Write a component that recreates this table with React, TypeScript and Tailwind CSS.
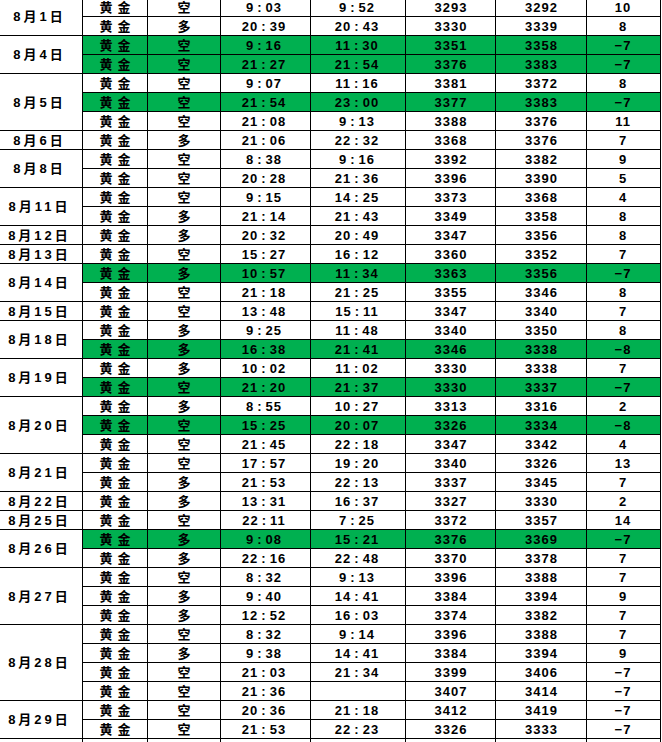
type Row = {
  kind: string;
  open: string;
  close: string;
  p1: string;
  p2: string;
  diff: string;
  green?: boolean;
};

type Group = { date: string; rows: Row[] };

const r = (
  kind: string,
  open: string,
  close: string,
  p1: string,
  p2: string,
  diff: string,
  green = false
): Row => ({ kind, open, close, p1, p2, diff, green });

const groups: Group[] = [
  { date: "8月1日", rows: [r("空", "9:03", "9:52", "3293", "3292", "10"), r("多", "20:39", "20:43", "3330", "3339", "8")] },
  { date: "8月4日", rows: [r("空", "9:16", "11:30", "3351", "3358", "−7", true), r("空", "21:27", "21:54", "3376", "3383", "−7", true)] },
  {
    date: "8月5日",
    rows: [
      r("空", "9:07", "11:16", "3381", "3372", "8"),
      r("空", "21:54", "23:00", "3377", "3383", "−7", true),
      r("空", "21:08", "9:13", "3388", "3376", "11"),
    ],
  },
  { date: "8月6日", rows: [r("多", "21:06", "22:32", "3368", "3376", "7")] },
  { date: "8月8日", rows: [r("空", "8:38", "9:16", "3392", "3382", "9"), r("空", "20:28", "21:36", "3396", "3390", "5")] },
  { date: "8月11日", rows: [r("空", "9:15", "14:25", "3373", "3368", "4"), r("多", "21:14", "21:43", "3349", "3358", "8")] },
  { date: "8月12日", rows: [r("多", "20:32", "20:49", "3347", "3356", "8")] },
  { date: "8月13日", rows: [r("空", "15:27", "16:12", "3360", "3352", "7")] },
  { date: "8月14日", rows: [r("多", "10:57", "11:34", "3363", "3356", "−7", true), r("空", "21:18", "21:25", "3355", "3346", "8")] },
  { date: "8月15日", rows: [r("空", "13:48", "15:11", "3347", "3340", "7")] },
  { date: "8月18日", rows: [r("多", "9:25", "11:48", "3340", "3350", "8"), r("多", "16:38", "21:41", "3346", "3338", "−8", true)] },
  { date: "8月19日", rows: [r("多", "10:02", "11:02", "3330", "3338", "7"), r("空", "21:20", "21:37", "3330", "3337", "−7", true)] },
  {
    date: "8月20日",
    rows: [
      r("多", "8:55", "10:27", "3313", "3316", "2"),
      r("空", "15:25", "20:07", "3326", "3334", "−8", true),
      r("空", "21:45", "22:18", "3347", "3342", "4"),
    ],
  },
  { date: "8月21日", rows: [r("空", "17:57", "19:20", "3340", "3326", "13"), r("多", "21:53", "22:13", "3337", "3345", "7")] },
  { date: "8月22日", rows: [r("多", "13:31", "16:37", "3327", "3330", "2")] },
  { date: "8月25日", rows: [r("空", "22:11", "7:25", "3372", "3357", "14")] },
  { date: "8月26日", rows: [r("多", "9:08", "15:21", "3376", "3369", "−7", true), r("多", "22:16", "22:48", "3370", "3378", "7")] },
  {
    date: "8月27日",
    rows: [
      r("空", "8:32", "9:13", "3396", "3388", "7"),
      r("多", "9:40", "14:41", "3384", "3394", "9"),
      r("多", "12:52", "16:03", "3374", "3382", "7"),
    ],
  },
  {
    date: "8月28日",
    rows: [
      r("空", "8:32", "9:14", "3396", "3388", "7"),
      r("多", "9:38", "14:41", "3384", "3394", "9"),
      r("空", "21:03", "21:34", "3399", "3406", "−7"),
      r("空", "21:36", "", "3407", "3414", "−7"),
    ],
  },
  { date: "8月29日", rows: [r("空", "20:36", "21:18", "3412", "3419", "−7"), r("空", "21:53", "22:23", "3326", "3333", "−7")] },
];

// the black background shows through 1px gaps as the sheet's grid lines
const cols = "grid grid-cols-[64px_72px_89px_94px_89px_90px_73px] gap-x-px bg-black pr-px";
const num = "font-['Liberation_Sans',Arial,sans-serif] font-bold text-[13px] leading-none tracking-[1px] pl-[1px]";
const cjk = "font-['Liberation_Sans','Noto_Sans_CJK_SC',sans-serif] font-bold text-[13px] leading-none";

function Time({ value }: { value: string }) {
  if (!value) return null;
  const [h, m] = value.split(":");
  return (
    <span className={num}>
      {h}
      <span className="mx-[3px]">:</span>
      {m}
    </span>
  );
}

function DataRow({ row }: { row: Row }) {
  const bg = row.green ? "bg-[#00b050]" : "bg-white";
  const cell = `h-[18px] flex items-center justify-center ${bg}`;
  return (
    <div className={`${cols} pb-px`}>
      <div className={cell}>
        <span className={`${cjk} tracking-[5px] pl-[5px]`}>黄金</span>
      </div>
      <div className={cell}>
        <span className={cjk}>{row.kind}</span>
      </div>
      <div className={`${cell} pr-[4px]`}>
        <Time value={row.open} />
      </div>
      <div className={`${cell} pr-[3px]`}>
        <Time value={row.close} />
      </div>
      <div className={cell}>
        <span className={num}>{row.p1}</span>
      </div>
      <div className={cell}>
        <span className={num}>{row.p2}</span>
      </div>
      <div className={`${cell} pr-[2px]`}>
        <span className={num}>{row.diff}</span>
      </div>
    </div>
  );
}

export default function App() {
  return (
    <div className="w-[662px] h-[742px] overflow-hidden bg-white text-black leading-none">
      <div className="-mt-[2px] w-[661px] flex flex-col">
        {groups.map((g) => (
          <div key={g.date} className="flex gap-x-px bg-black">
            <div className="w-[82px] shrink-0 mb-px flex items-center justify-center bg-white">
              <span className={`${cjk} tracking-[3px] pr-[3px]`}>{g.date}</span>
            </div>
            <div className="flex flex-col">
              {g.rows.map((row, i) => (
                <DataRow key={i} row={row} />
              ))}
            </div>
          </div>
        ))}
        <div className="flex gap-x-px bg-black">
          <div className="w-[82px] h-[19px] shrink-0 bg-white" />
          <div className={cols}>
            {Array.from({ length: 7 }).map((_, i) => (
              <div key={i} className="h-[19px] bg-white" />
            ))}
          </div>
        </div>
      </div>
    </div>
  );
}
